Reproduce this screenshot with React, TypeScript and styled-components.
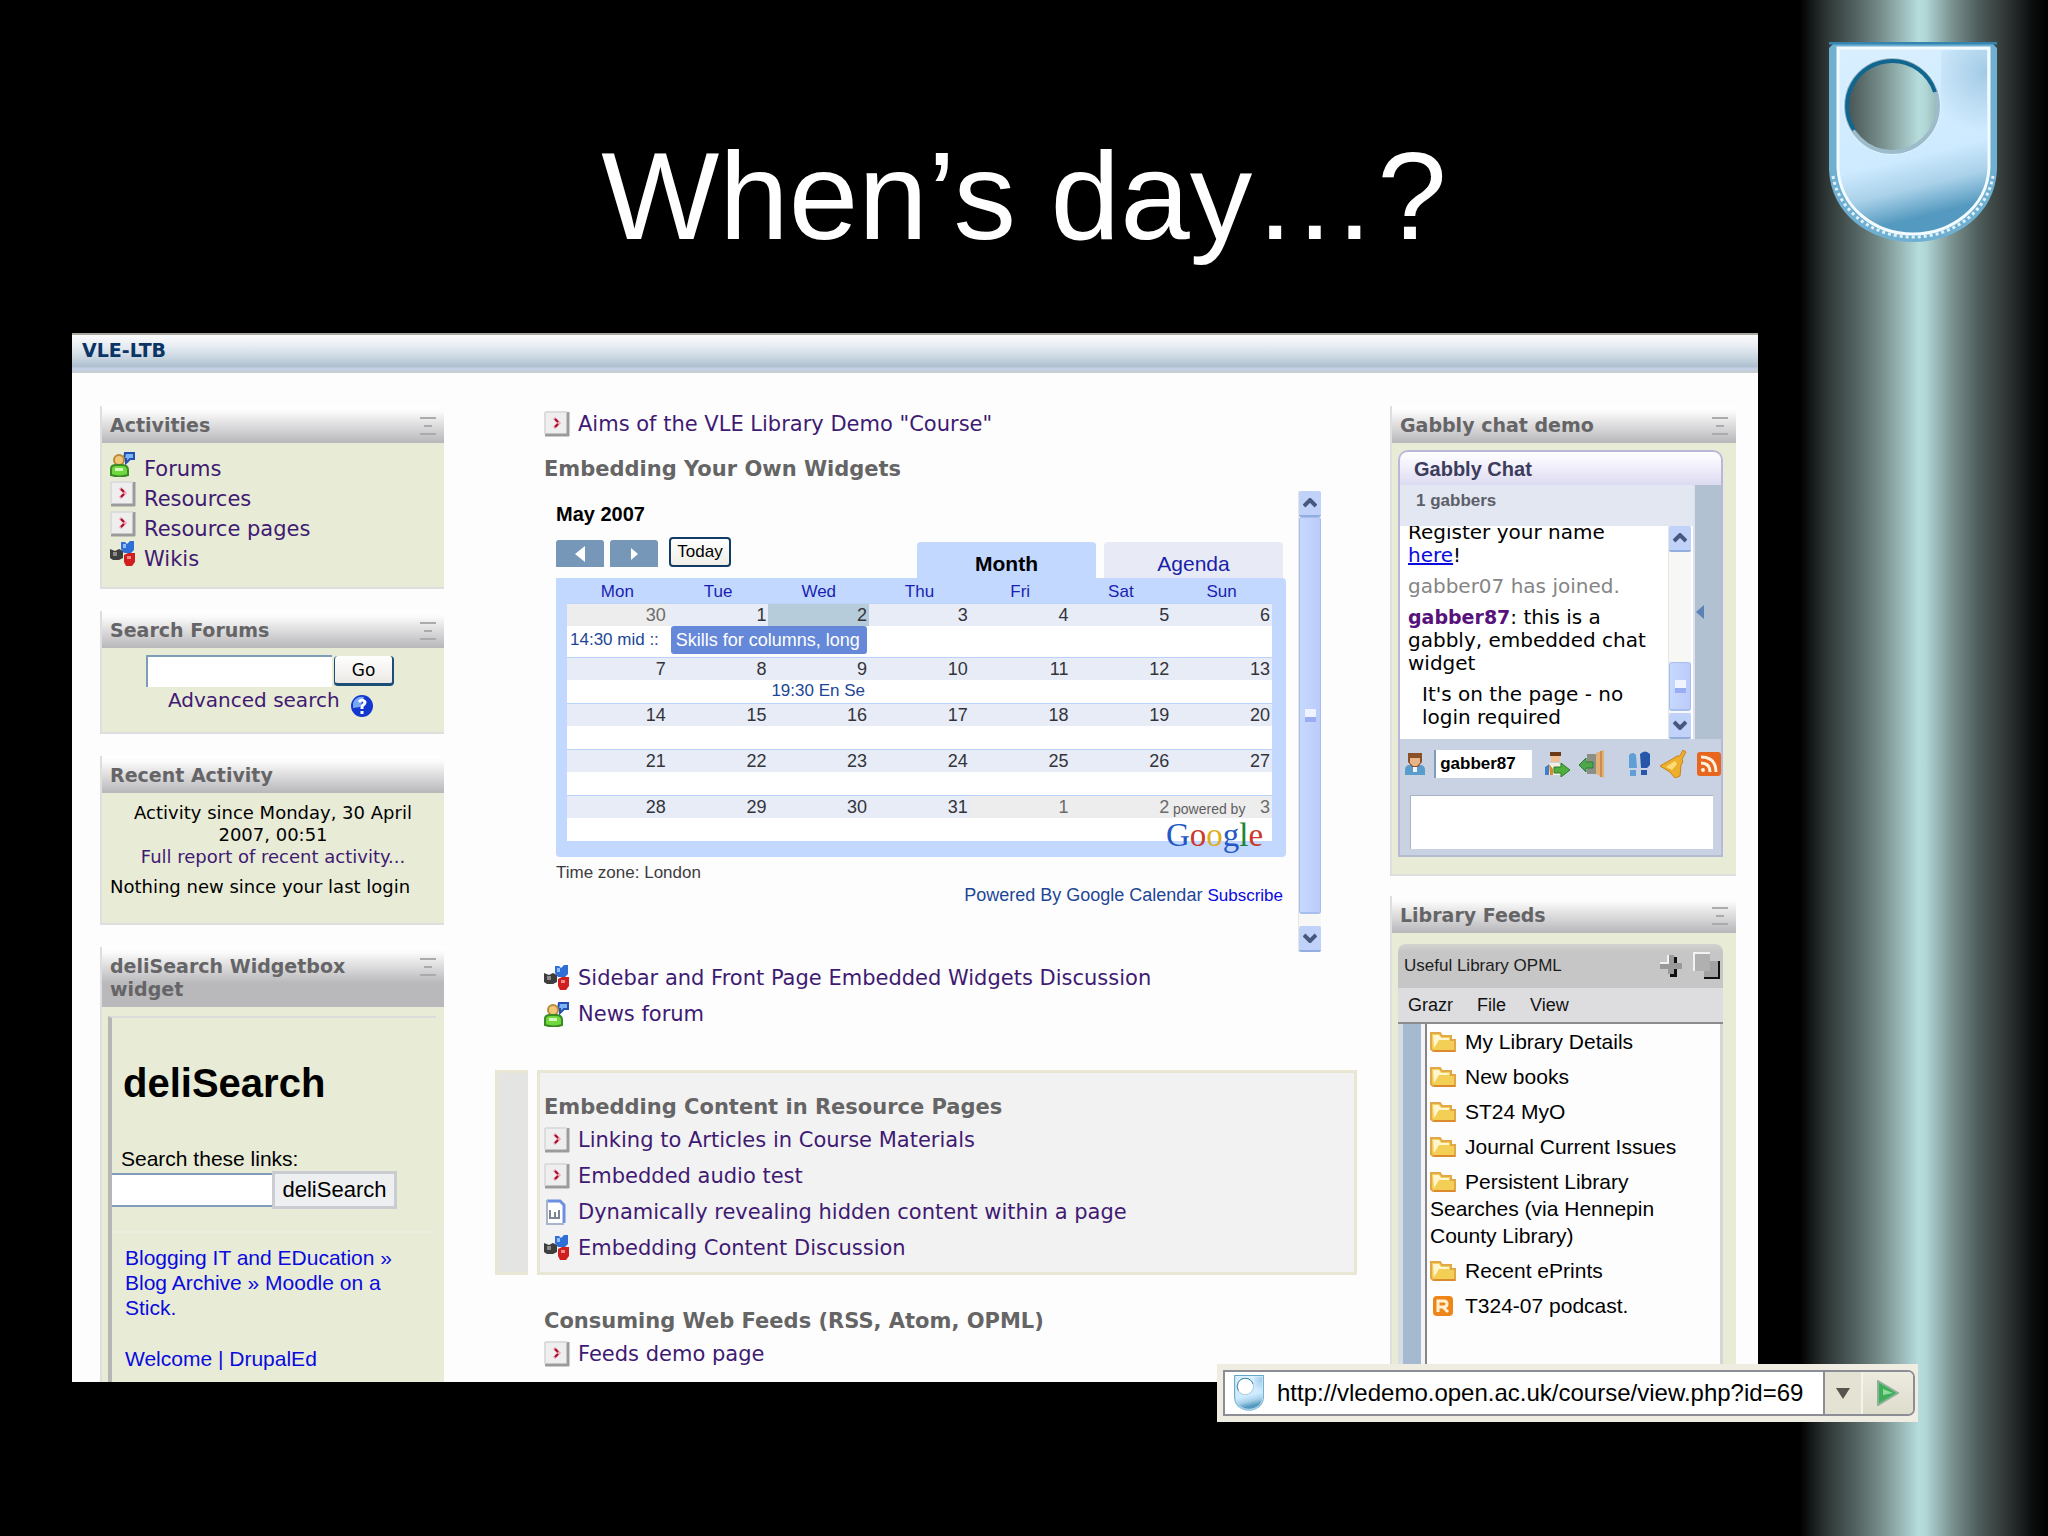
import React from "react";
import styled, { createGlobalStyle, css } from "styled-components";

const verdana = `"DejaVu Sans", sans-serif`;
const arial = `"Liberation Sans", Arial, sans-serif`;

const GlobalStyle = createGlobalStyle`
  *, *::before, *::after { box-sizing: border-box; }
  body { margin: 0; background: #000; font-family: ${verdana}; }
  h1, h2, h3, p, ul { margin: 0; padding: 0; }
  ul { list-style: none; }
  a { text-decoration: none; }
  button, input, textarea { font: inherit; margin: 0; padding: 0; border-radius: 0; outline: none; }
  button { cursor: pointer; background: none; border: 0; }
  svg { display: block; flex: none; }
`;

/* ---------- slide ---------- */

const Slide = styled.main`
  position: relative;
  display: flex;
  flex-direction: column;
  height: 100vh;
  overflow: hidden;
  padding-bottom: 154px;
  background:
    linear-gradient(90deg, #000 0%, #2b3332 10%, #576866 24%, #7c9492 34%, #b6dddc 48%, #b0d5d4 51%, #7b9391 61%, #4e5d5b 72%, #323a39 82%, #0b0d0d 94%, #000 100%)
    right / 248px 100% no-repeat, #000;
`;

const Title = styled.h1`
  padding: 124px 0 65px;
  text-align: center;
  color: #fff;
  font: 400 125px/144px ${arial};
`;

const CrestHolder = styled.div`
  position: absolute;
  top: 42px;
  right: 51px;
`;

/* ---------- captured page ---------- */

const Page = styled.section`
  flex: 1;
  min-height: 0;
  overflow: hidden;
  margin: 0 290px 0 72px;
  background: #fdfdfe;
`;

const PageBar = styled.header`
  height: 40px;
  padding-left: 10px;
  border-top: 2px solid #a9a79d;
  border-bottom: 2px solid #c9cdd0;
  background: linear-gradient(#fbfbfd, #e8edf3 30%, #c8d5e0 65%, #adbfd0 88%, #c3cfe2 92%);
  color: #0b3564;
  font: 700 19px/31px ${verdana};
`;

const Columns = styled.div`
  display: grid;
  grid-template-columns: 344px 1fr 346px;
  gap: 33px;
  padding: 33px 22px 0 28px;
`;

const SideColumn = styled.aside<{ $tight?: boolean }>`
  display: flex;
  flex-direction: column;
  gap: ${(p) => (p.$tight ? 20 : 22)}px;
`;

const BlockBox = styled.section`
  border: 2px solid #dedede;
  border-width: 0 0 2px 2px;
  background: #e8ebd6;
`;

const BlockHead = styled.header`
  display: flex;
  justify-content: space-between;
  align-items: flex-start;
  gap: 20px;
  padding: 8px 8px 6px;
  background: linear-gradient(#fff, #fafafa 6px, #b9b8bb 36px);
`;

const BlockTitle = styled.h2`
  color: #656567;
  font: 700 19px/23px ${verdana};
`;

const Toggle = styled.button`
  display: flex;
  flex-direction: column;
  align-items: center;
  gap: 6px;
  padding-top: 3px;
  i { width: 16px; height: 2px; background: #ababab; }
  i:nth-child(2) { width: 8px; }
`;

const purple = "#3f1a72";

const IconRow = styled.a`
  display: flex;
  align-items: flex-start;
  gap: 8px;
  height: 30px;
  color: ${purple};
  font-size: 21px;
  span { align-self: flex-end; line-height: 24px; }
`;

const ActivityList = styled.ul`
  padding: 8px 8px 16px;
`;

const ForumSearch = styled.form`
  padding: 7px 0 20px;
`;

const FieldRow = styled.div`
  display: flex;
  align-items: center;
  gap: 2px;
  padding-left: 44px;
`;

const ForumInput = styled.input`
  width: 186px;
  height: 32px;
  border: 2px solid #7f9db9;
  border-width: 2px 0 0 2px;
  background: #fff;
`;

const GoButton = styled.button`
  width: 60px;
  height: 30px;
  border: 2px solid #1c4f78;
  border-width: 0 2px 3px 1px;
  border-radius: 4px;
  background: linear-gradient(#fff, #ece9e4);
  color: #000;
  font: 17px/24px ${verdana};
`;

const AdvancedRow = styled.div`
  display: flex;
  align-items: flex-start;
  gap: 10px;
  padding-left: 66px;
  height: 25px;
  a { color: ${purple}; font-size: 20px; line-height: 26px; }
  svg { margin-top: 7px; }
`;

const RecentBody = styled.div`
  padding: 9px 8px 25px;
  color: #000;
  font-size: 18px;
  line-height: 22px;
  text-align: center;
  white-space: nowrap;
  a { color: ${purple}; }
  p + p { margin-top: 8px; text-align: left; }
`;

const DeliFrame = styled.div`
  margin: 9px 8px 0 6px;
  min-height: 440px;
  border: 4px solid #b6b6b6;
  border-width: 2px 0 0 4px;
  border-top-color: #dcdcdc;
  font-family: ${arial};
`;

const DeliTitle = styled.h3`
  padding: 42px 11px 41px;
  font: 700 40px/46px ${arial};
`;

const DeliLabel = styled.label`
  display: block;
  padding-left: 9px;
  font-size: 21px;
  line-height: 24px;
`;

const DeliRow = styled.div`
  display: flex;
  align-items: center;
  padding-bottom: 22px;
  border-bottom: 2px solid #eceddf;
  input { width: 160px; height: 34px; border: 2px solid #7f9db9; border-width: 2px 0; background: #fff; }
  button { width: 125px; height: 38px; border: 3px solid #c9cdd2; background: #eeeff1; color: #000; font-size: 22px; }
`;

const DeliLinks = styled.div`
  display: flex;
  flex-direction: column;
  gap: 26px;
  padding: 12px 26px 0 13px;
  font-size: 21px;
  line-height: 25px;
  a { color: #0a0adf; }
`;

/* ---------- middle column ---------- */

const Middle = styled.div`
  margin-left: 18px;
`;

const Week = styled.section<{ $framed?: boolean; $first?: boolean }>`
  display: grid;
  grid-template-columns: 33px 1fr;
  gap: 9px;
  margin-bottom: 9px;
  ${(p) => p.$first && css`margin-bottom: 29px;`}
  --edge: ${(p) => (p.$framed ? "#e9e7d3" : "transparent")};
`;

const WeekStrip = styled.div<{ $framed?: boolean }>`
  border: 3px solid var(--edge);
  border-width: 3px 0 3px 3px;
  background: ${(p) => (p.$framed ? "#e4e4e2" : "transparent")};
`;

const WeekBody = styled.div<{ $framed?: boolean; $first?: boolean }>`
  padding: ${(p) => (p.$first ? "0 0 9px 4px" : "20px 4px 6px")};
  border: 3px solid var(--edge);
  border-top-width: ${(p) => (p.$first ? 0 : 3)}px;
  border-bottom-width: ${(p) => (p.$first ? 0 : 3)}px;
  background: ${(p) => (p.$framed ? "#f3f2f3" : "transparent")};
`;

const WeekTitle = styled.h3<{ $spaced?: boolean }>`
  margin-top: ${(p) => (p.$spaced ? 13 : 0)}px;
  color: #656565;
  font: 700 21px/29px ${verdana};
`;

const ResourceRow = styled.a`
  display: flex;
  align-items: center;
  gap: 8px;
  height: 36px;
  color: ${purple};
  font-size: 21px;
  line-height: 28px;
  white-space: nowrap;
`;

/* ---------- calendar ---------- */

const Widget = styled.div`
  display: flex;
  gap: 12px;
  height: 461px;
  margin: 7px 33px 8px 12px;
  font-family: ${arial};
`;

const Calendar = styled.div`
  flex: 1;
  padding-top: 11px;
`;

const MonthName = styled.h4`
  margin: 0;
  font: 700 20px/24px ${arial};
`;

const CalTools = styled.div`
  display: flex;
  align-items: flex-end;
  gap: 6px;
  height: 52px;
  padding-right: 3px;
`;

const Arrow = styled.button`
  display: grid;
  place-items: center;
  width: 48px;
  height: 27px;
  margin-bottom: 11px;
  border-radius: 3px 3px 0 0;
  background: #7797b8;
`;

const Today = styled.button`
  width: 62px;
  height: 30px;
  margin: 0 auto 11px 5px;
  border: 2px solid #123c66;
  border-radius: 4px;
  background: linear-gradient(#fff, #efeee6);
  color: #000;
  font-size: 17px;
`;

const Tab = styled.button<{ $active?: boolean }>`
  width: 179px;
  height: 36px;
  margin-left: 2px;
  padding-top: 8px;
  border-radius: 4px 4px 0 0;
  background: ${(p) => (p.$active ? "#c3d8ff" : "#e8ebf6")};
  color: ${(p) => (p.$active ? "#000" : "#1a1fa8")};
  font: ${(p) => (p.$active ? 700 : 400)} 21px/24px ${arial};
`;

const CalFrame = styled.div`
  position: relative;
  padding: 0 14px 16px 11px;
  border-radius: 0 4px 4px 4px;
  background: #c3d8ff;
`;

const CalTable = styled.table`
  width: 100%;
  table-layout: fixed;
  border-spacing: 0;
  border-collapse: separate;
  th { height: 25px; padding: 2px 0 0; color: #1a1fb0; font: 17px/20px ${arial}; text-align: center; }
  td { padding: 0; }
`;

const DayCell = styled.td<{ $tone?: "other" | "today" }>`
  height: 23px;
  border-top: 1px solid #b8d4fa;
  background: ${(p) => (p.$tone === "today" ? "#b7ccda" : p.$tone === "other" ? "#ededee" : "#e8ecf7")};
  color: ${(p) => (p.$tone === "other" ? "#6b6b6b" : "#33343a")};
  font-size: 18px;
  line-height: 22px;
  text-align: right;
  && { padding-right: 2px; }
`;

const SlotCell = styled.td<{ $tall?: boolean }>`
  height: ${(p) => (p.$tall ? 31 : 23)}px;
  background: #fff;
  color: #1d4796;
  font-size: 17px;
  white-space: nowrap;
  overflow: hidden;
  vertical-align: top;
  && { padding-left: 3px; }
`;

const EventBar = styled.div`
  overflow: hidden;
  height: 28px;
  margin-right: 2px;
  padding-left: 5px;
  border-radius: 3px;
  background: #6588d9;
  color: #fff;
  font-size: 18px;
  line-height: 28px;
`;

const EventText = styled.div<{ $tall?: boolean }>`
  line-height: ${(p) => (p.$tall ? 28 : 22)}px;
`;

const Brand = styled.div`
  position: absolute;
  right: 22px;
  bottom: 3px;
  width: 98px;
  text-align: left;
  small { display: block; padding-left: 7px; color: #5f5f5f; font: 14px/16px ${arial}; }
  strong { display: block; font: 400 33px/37px "Liberation Serif", serif; }
  .b { color: #2558c4; }
  .r { color: #c93a2c; }
  .y { color: #e0ae1c; }
  .g { color: #1c8531; }
`;

const Zone = styled.p`
  margin-top: 6px;
  color: #3c3c3c;
  font-size: 17px;
  line-height: 20px;
`;

const Powered = styled.p`
  margin-top: 2px;
  padding-right: 3px;
  color: #1d4796;
  font-size: 18px;
  line-height: 20px;
  text-align: right;
  a { color: #0a0adf; font-size: 17px; }
`;

/* ---------- scroll bars ---------- */

const Bar = styled.div`
  display: flex;
  flex-direction: column;
  width: 23px;
  border-left: 1px solid #e6e6e0;
  background: #f7f7f5;
`;

const BarButton = styled.button`
  display: grid;
  place-items: center;
  height: 26px;
  border-bottom: 2px solid #93aede;
  border-radius: 2px;
  background: #c0d2fa;
`;

const Thumb = styled.div<{ $size?: number }>`
  display: grid;
  place-items: center;
  ${(p) => (p.$size ? css`height: ${p.$size}px; margin-top: auto;` : css`flex: 1;`)}
  margin-bottom: ${(p) => (p.$size ? 2 : 12)}px;
  border: 1px solid #a8bdf0;
  border-bottom-width: 2px;
  border-radius: 3px;
  background: linear-gradient(90deg, #c6d9fe, #bccbf9);
  i { width: 11px; height: 13px; background: linear-gradient(#eef3ff 60%, #98aef0 60%); }
`;

/* ---------- chat ---------- */

const ChatBody = styled.div`
  padding: 7px 13px 17px 6px;
`;

const ChatFrame = styled.div`
  border: 2px solid #b9b8da;
  border-radius: 10px 10px 0 0;
  border-bottom-color: #b4bdd0;
  background: #c8d2e2;
  overflow: hidden;
`;

const ChatTitle = styled.h3`
  padding: 2px 14px 0;
  height: 33px;
  background: linear-gradient(#fff, #f3f1fb 40%, #dcdaf0);
  color: #3c3c5c;
  font: 700 20px/30px ${arial};
`;

const ChatMain = styled.div`
  display: grid;
  grid-template-columns: 1fr 28px;
  grid-template-rows: 41px 213px;
`;

const Gabbers = styled.div`
  padding-left: 16px;
  background: #e2e7f2;
  color: #5c5f68;
  font: 700 17px/32px ${arial};
`;

const ChatSide = styled.button`
  grid-column: 2;
  grid-row: 1 / 3;
  display: grid;
  place-items: center start;
  padding-left: 1px;
  border-left: 2px solid #dde3ee;
  background: #b2c1d2;
`;

const LogPane = styled.div`
  display: flex;
  justify-content: space-between;
  overflow: hidden;
  padding-right: 2px;
  background: #fff;
`;

const Log = styled.div`
  display: flex;
  flex-direction: column;
  justify-content: flex-end;
  gap: 8px;
  padding: 0 0 10px 8px;
  color: #000;
  font-size: 20px;
  line-height: 23px;
  white-space: nowrap;
  a { color: #0a0adf; text-decoration: underline; text-decoration-thickness: 2px; }
`;

const LogLine = styled.p<{ $quiet?: boolean; $indent?: boolean }>`
  color: ${(p) => (p.$quiet ? "#858585" : "#000")};
  padding-left: ${(p) => (p.$indent ? 14 : 0)}px;
  b { color: #57127c; font-size: 19px; }
`;

const ChatTools = styled.div`
  display: flex;
  align-items: center;
  justify-content: space-between;
  height: 56px;
  padding: 0 2px 6px 5px;
  input {
    width: 98px;
    height: 28px;
    padding-left: 4px;
    border: 0;
    border-left: 2px solid #7f9db9;
    background: #fff;
    color: #000;
    font: 700 17px ${arial};
  }
  svg:first-child { margin-right: -3px; }
  button { flex: none; }
  button:nth-of-type(3) { margin-left: 12px; }
`;

const ChatEntry = styled.textarea`
  display: block;
  width: calc(100% - 18px);
  height: 54px;
  margin: 0 8px 6px 10px;
  border: 1px solid #a9b3c2;
  border-width: 1px 0 0 1px;
  background: #fff;
  resize: none;
`;

/* ---------- library feeds ---------- */

const FeedBody = styled.div`
  padding: 11px 13px 0 6px;
`;

const FeedTitle = styled.h3`
  display: flex;
  align-items: center;
  gap: 11px;
  height: 44px;
  padding: 0 2px 0 6px;
  border-radius: 8px 8px 0 0;
  background: linear-gradient(#d2d2cf, #c6c6c6 8px, #c6c6c6);
  color: #1c1c1c;
  font: 17px/24px ${arial};
  span { flex: 1; }
`;

const FeedMenu = styled.nav`
  display: flex;
  gap: 24px;
  height: 36px;
  padding-left: 10px;
  border-bottom: 2px solid #8b8b8f;
  background: #dddcdf;
  a { color: #111; font: 18px/35px ${arial}; }
`;

const FeedMain = styled.div`
  display: flex;
  border-left: 5px solid #d7dde0;
`;

const FeedGutter = styled.div`
  width: 22px;
  border-right: 4px solid #f4f4f6;
  background: #a5b9d0;
`;

const FeedList = styled.ul`
  flex: 1;
  min-height: 440px;
  padding-left: 2px;
  border-left: 2px solid #85858a;
  border-right: 3px solid #d6d6d6;
  background: #fdfdfe;
`;

const FeedItem = styled.li`
  padding: 4px 0 4px 1px;
  font: 21px/27px ${arial};
  a { color: #000; }
  svg { display: inline-block; vertical-align: -4px; margin-right: 9px; }
`;

/* ---------- address bar ---------- */

const Address = styled.form`
  position: absolute;
  right: 130px;
  bottom: 114px;
  width: 701px;
  padding: 6px 3px 6px 6px;
  background: #efede2;
`;

const AddressBox = styled.div`
  display: flex;
  align-items: stretch;
  height: 46px;
  border: 2px solid #8d8d96;
  border-radius: 0 7px 7px 0;
  background: #fff;
  overflow: hidden;
  > svg { align-self: center; margin: 0 13px 0 9px; }
  input { flex: 1; min-width: 0; border: 0; background: none; color: #000; font: 24px/40px ${arial}; }
`;

const AddressButton = styled.button<{ $wide?: boolean }>`
  display: grid;
  place-items: center;
  width: ${(p) => (p.$wide ? 52 : 38)}px;
  border-left: 2px solid ${(p) => (p.$wide ? "#f5f4ec" : "#8d8d96")};
  background: ${(p) => (p.$wide ? "linear-gradient(#edebdf, #dedccb)" : "#e4e2d3")};
`;

/* ---------- drawings ---------- */

const Crest = ({ width, id }: { width: number; id: string }) => (
  <svg width={width} height={(width * 200) / 168} viewBox="0 0 168 200" aria-hidden="true">
    <defs>
      <linearGradient id={`${id}a`} x1="0" y1="0" x2="0.2" y2="1">
        <stop offset="0" stopColor="#d9efff" />
        <stop offset="0.66" stopColor="#cdeaff" />
        <stop offset="0.82" stopColor="#a9d1e9" />
        <stop offset="0.98" stopColor="#5499bf" />
      </linearGradient>
      <radialGradient id={`${id}b`} gradientUnits="userSpaceOnUse" cx="157" cy="30" r="60">
        <stop offset="0" stopColor="#a3cbe5" />
        <stop offset="1" stopColor="#a3cbe5" stopOpacity="0" />
      </radialGradient>
    </defs>
    <path
      fillRule="evenodd"
      fill="#6fb0d2"
      d="M6 0H162L168 6V128C166 172 128 200 84 200S2 172 0 128V6ZM63 18A46 46 0 1 0 63 110A46 46 0 1 0 63 18Z"
    />
    <path
      fillRule="evenodd"
      fill={`url(#${id}a)`}
      stroke="#f4fbff"
      strokeWidth="3"
      d="M9 6H160V126C158 166 122 192 84 192S11 166 9 126ZM63 17A47 47 0 1 0 63 111A47 47 0 1 0 63 17Z"
    />
    <path fill={`url(#${id}b)`} d="M112 8H158V96H112Z" />
    <path d="M0 0H168" stroke="#3585b0" strokeWidth="5" />
    <path fill="none" stroke="#dff1fb" strokeWidth="3" strokeDasharray="3 3" d="M4 134C10 170 44 195 84 195S158 170 164 134" />
    <circle cx="63" cy="64" r="46" fill="none" stroke="#9cbccb" strokeWidth="4" />
    <path fill="none" stroke="#11668f" strokeWidth="4" d="M25 88A45 45 0 0 1 63 19A45 45 0 0 1 106 50" />
  </svg>
);

const ForumIcon = () => (
  <svg width="26" height="26" viewBox="0 0 26 26" aria-hidden="true">
    <path d="M15 2H24V8H20L16 12V8H14Z" fill="#7db4f5" stroke="#2450b4" strokeWidth="2" />
    <circle cx="9" cy="9" r="5" fill="#f2c878" stroke="#b98a3a" strokeWidth="2" />
    <path d="M1 24V18Q1 14 6 14H12Q18 14 18 19V24Q10 27 1 24Z" fill="#6fd83c" stroke="#3b8a26" strokeWidth="2" />
    <path d="M5 17H13V20H5Z" fill="#d6f8c0" />
  </svg>
);

const PageIcon = () => (
  <svg width="26" height="26" viewBox="0 0 26 26" aria-hidden="true">
    <path d="M1 1H25V25H1Z" fill="#efeeef" />
    <path d="M24 1V25M1 24H25" stroke="#9b9b9b" strokeWidth="3" fill="none" />
    <path d="M1 1H23M1 1V23" stroke="#dcdcdc" strokeWidth="2" fill="none" />
    <path d="M10 7L15 12L10 17" stroke="#f2a0ae" strokeWidth="3" fill="none" />
    <path d="M11 8L14 11M14 13L11 16" stroke="#a01030" strokeWidth="2" fill="none" />
  </svg>
);

const WikiIcon = () => (
  <svg width="26" height="26" viewBox="0 0 26 26" aria-hidden="true">
    <path d="M0 8L5 10L9 8L13 10V17L9 19H3L0 17Z" fill="#3e3e3e" />
    <path d="M3 11H7V15H3Z" fill="#8d8d8d" />
    <path d="M11 1H15L17 3L20 0H24V9L21 12H14L11 8Z" fill="#2f6fd8" />
    <path d="M13 3H16V7H13Z" fill="#94bff5" />
    <path d="M14 14L18 12H25V21L22 25H16L14 21Z" fill="#cf1f1f" />
    <path d="M17 15H21V18H17Z" fill="#f58a82" />
  </svg>
);

const DocIcon = () => (
  <svg width="26" height="26" viewBox="0 0 26 26" aria-hidden="true">
    <path d="M3 1H16L21 6V25H3Z" fill="#fff" />
    <path d="M3 2H16L20 6V24" stroke="#6c8fe0" strokeWidth="3" fill="none" />
    <path d="M3 1V25H20" stroke="#a9b4cc" strokeWidth="2" fill="none" />
    <path d="M6 11V19H15V11M11 13V19M6 19H15" stroke="#7d8494" strokeWidth="2" fill="none" />
  </svg>
);

const HelpIcon = () => (
  <svg width="24" height="24" viewBox="0 0 24 24" aria-hidden="true">
    <circle cx="12" cy="12" r="11" fill="#1437cf" />
    <path d="M3 9A9 9 0 0 1 14 3L10 13L3 14Z" fill="#79a7f8" />
    <path d="M9 8Q12 4 15 8Q15 10 12 12V15M12 17V20" stroke="#fff" strokeWidth="3" fill="none" />
  </svg>
);

const FolderIcon = () => (
  <svg width="26" height="22" viewBox="0 0 26 22" aria-hidden="true">
    <path d="M1 2H10L12 5H21V9H25V20H3L1 18Z" fill="#f3cf55" stroke="#e0a848" strokeWidth="2" />
    <path d="M3 4H9L11 7H19V9H9L4 17Z" fill="#fff6d0" />
    <path d="M4 20H25" stroke="#dd8a2e" strokeWidth="2" />
  </svg>
);

const FeedIcon = () => (
  <svg width="26" height="26" viewBox="0 0 26 26" aria-hidden="true">
    <rect x="1" y="1" width="24" height="24" rx="3" fill="#e8671e" />
    <path d="M5 6Q20 6 20 21M5 12Q14 12 14 21" stroke="#fff0e0" strokeWidth="3" fill="none" />
    <circle cx="7" cy="19" r="2" fill="#fff0e0" />
  </svg>
);

const PodcastIcon = () => (
  <svg width="26" height="22" viewBox="0 0 26 22" aria-hidden="true">
    <rect x="3" y="1" width="20" height="20" rx="4" fill="#ee8518" />
    <path d="M8 17V6H14Q17 6 17 9Q17 12 13 12L18 17M8 12H13" stroke="#fff1d2" strokeWidth="3" fill="none" />
  </svg>
);

const PersonIcon = () => (
  <svg width="20" height="24" viewBox="0 0 20 24" aria-hidden="true">
    <path d="M0 23V18Q0 13 5 13H15Q20 13 20 18V23Z" fill="#5a9ccb" />
    <path d="M3 1H17V10L13 15H7L3 10Z" fill="#8a5028" />
    <path d="M5 6H15V11L12 14H8L5 11Z" fill="#e8b489" />
    <path d="M8 15H12V20H8Z" fill="#f0f4f8" />
  </svg>
);

const InviteIcon = () => (
  <svg width="26" height="26" viewBox="0 0 26 26" aria-hidden="true">
    <path d="M6 1H17V5H6Z" fill="#6b3a16" />
    <path d="M7 5H16V11H7Z" fill="#f0bf92" />
    <path d="M1 24V16Q3 12 8 12H15L18 16V24Z" fill="#f4efe4" />
    <path d="M1 24V16L5 13V24Z" fill="#3f7fd0" />
    <path d="M5 13L9 18V24H6Z" fill="#d88a2a" />
    <path d="M10 16H17V12L26 19L17 26V22H10Z" fill="#4fae3e" stroke="#2d7d2c" />
  </svg>
);

const DoorIcon = () => (
  <svg width="26" height="28" viewBox="0 0 26 28" aria-hidden="true">
    <path d="M8 4H20V24H8Z" fill="#8b8f86" />
    <path d="M17 3L25 0V28L17 24Z" fill="#e3b077" />
    <path d="M22 1V27" stroke="#c98d50" strokeWidth="2" />
    <path d="M0 15L7 8V12H14V18H7V22Z" fill="#4ea64a" stroke="#2f7a36" />
  </svg>
);

const StepsIcon = () => (
  <svg width="24" height="26" viewBox="0 0 24 26" aria-hidden="true">
    <path d="M2 4Q6 0 9 4L10 17H2ZM3 19H9V25H3Z" fill="#5f9ed6" />
    <path d="M13 3Q18 -2 23 3V14L20 17H14ZM14 19H20V24H14Z" fill="#2757a8" />
  </svg>
);

const BellIcon = () => (
  <svg width="27" height="28" viewBox="0 0 27 28" aria-hidden="true">
    <path d="M0 16L14 8Q17 5 20 6L23 0L26 2L22 9Q24 12 21 15L20 26L15 28L10 22Z" fill="#eeb02c" stroke="#c98214" />
    <path d="M6 17L15 11L17 14L12 20Z" fill="#fbdc79" />
  </svg>
);

const Chevron = ({ down }: { down?: boolean }) => (
  <svg width="14" height="10" viewBox="0 0 14 10" aria-hidden="true">
    <path d={down ? "M1 2L7 8L13 2" : "M1 8L7 2L13 8"} stroke="#46587c" strokeWidth="4" fill="none" />
  </svg>
);

/* ---------- parts ---------- */

const Block = ({ title, toggle = true, children }: { title: string; toggle?: boolean; children: React.ReactNode }) => (
  <BlockBox>
    <BlockHead>
      <BlockTitle>{title}</BlockTitle>
      {toggle && (
        <Toggle type="button" aria-label={`Hide ${title}`}>
          <i />
          <i />
          <i />
        </Toggle>
      )}
    </BlockHead>
    {children}
  </BlockBox>
);

const ScrollBar = ({ thumb }: { thumb?: number }) => (
  <Bar>
    <BarButton type="button" aria-label="Scroll up">
      <Chevron />
    </BarButton>
    <Thumb $size={thumb}>
      <i />
    </Thumb>
    <BarButton type="button" aria-label="Scroll down">
      <Chevron down />
    </BarButton>
  </Bar>
);

const Resource = ({ icon, children }: { icon: React.ReactNode; children: React.ReactNode }) => (
  <ResourceRow href="#">
    {icon}
    {children}
  </ResourceRow>
);

const weeks = [
  [30, 1, 2, 3, 4, 5, 6],
  [7, 8, 9, 10, 11, 12, 13],
  [14, 15, 16, 17, 18, 19, 20],
  [21, 22, 23, 24, 25, 26, 27],
  [28, 29, 30, 31, 1, 2, 3],
];

const toneOf = (week: number, day: number) => {
  if ((week === 0 && day === 0) || (week === 4 && day > 3)) return "other" as const;
  if (week === 0 && day === 2) return "today" as const;
  return undefined;
};

const Slots = ({ week }: { week: number }) => {
  if (week === 0) {
    return (
      <tr>
        <SlotCell $tall>
          <EventText $tall>14:30 mid ::</EventText>
        </SlotCell>
        <SlotCell $tall colSpan={2}>
          <EventBar>Skills for columns, long</EventBar>
        </SlotCell>
        <SlotCell $tall colSpan={4} />
      </tr>
    );
  }
  if (week === 1) {
    return (
      <tr>
        <SlotCell colSpan={2} />
        <SlotCell>
          <EventText>19:30 En Se</EventText>
        </SlotCell>
        <SlotCell colSpan={4} />
      </tr>
    );
  }
  return (
    <tr>
      <SlotCell colSpan={7} />
    </tr>
  );
};

const CalendarWidget = () => (
  <Widget>
    <Calendar>
      <MonthName>May 2007</MonthName>
      <CalTools>
        <Arrow type="button" aria-label="Previous month">
          <svg width="10" height="16" viewBox="0 0 10 16">
            <path d="M10 0V16L0 8Z" fill="#fff" />
          </svg>
        </Arrow>
        <Arrow type="button" aria-label="Next month">
          <svg width="7" height="12" viewBox="0 0 7 12">
            <path d="M0 0V12L7 6Z" fill="#fff" />
          </svg>
        </Arrow>
        <Today type="button">Today</Today>
        <Tab type="button" $active>
          Month
        </Tab>
        <Tab type="button">Agenda</Tab>
      </CalTools>
      <CalFrame>
        <CalTable>
          <thead>
            <tr>
              {["Mon", "Tue", "Wed", "Thu", "Fri", "Sat", "Sun"].map((d) => (
                <th key={d}>{d}</th>
              ))}
            </tr>
          </thead>
          <tbody>
            {weeks.map((days, w) => (
              <React.Fragment key={w}>
                <tr>
                  {days.map((n, d) => (
                    <DayCell key={d} $tone={toneOf(w, d)}>
                      {n}
                    </DayCell>
                  ))}
                </tr>
                <Slots week={w} />
              </React.Fragment>
            ))}
          </tbody>
        </CalTable>
        <Brand>
          <small>powered by</small>
          <strong>
            <span className="b">G</span>
            <span className="r">o</span>
            <span className="y">o</span>
            <span className="b">g</span>
            <span className="g">l</span>
            <span className="r">e</span>
          </strong>
        </Brand>
      </CalFrame>
      <Zone>Time zone: London</Zone>
      <Powered>
        Powered By Google Calendar <a href="#">Subscribe</a>
      </Powered>
    </Calendar>
    <ScrollBar />
  </Widget>
);

const feeds = [
  "My Library Details",
  "New books",
  "ST24 MyO",
  "Journal Current Issues",
  "Persistent Library Searches (via Hennepin County Library)",
  "Recent ePrints",
];

export default function App() {
  return (
    <>
      <GlobalStyle />
      <Slide>
        <Title>When’s day…?</Title>
        <CrestHolder>
          <Crest width={168} id="crest" />
        </CrestHolder>
        <Page>
          <PageBar>VLE-LTB</PageBar>
          <Columns>
            <SideColumn>
              <Block title="Activities">
                <ActivityList>
                  <li>
                    <IconRow href="#">
                      <ForumIcon />
                      <span>Forums</span>
                    </IconRow>
                  </li>
                  <li>
                    <IconRow href="#">
                      <PageIcon />
                      <span>Resources</span>
                    </IconRow>
                  </li>
                  <li>
                    <IconRow href="#">
                      <PageIcon />
                      <span>Resource pages</span>
                    </IconRow>
                  </li>
                  <li>
                    <IconRow href="#">
                      <WikiIcon />
                      <span>Wikis</span>
                    </IconRow>
                  </li>
                </ActivityList>
              </Block>
              <Block title="Search Forums">
                <ForumSearch>
                  <FieldRow>
                    <ForumInput type="text" aria-label="Search forums" />
                    <GoButton type="button">Go</GoButton>
                  </FieldRow>
                  <AdvancedRow>
                    <a href="#">Advanced search</a>
                    <HelpIcon />
                  </AdvancedRow>
                </ForumSearch>
              </Block>
              <Block title="Recent Activity" toggle={false}>
                <RecentBody>
                  <p>
                    Activity since Monday, 30 April
                    <br />
                    2007, 00:51
                    <br />
                    <a href="#">Full report of recent activity...</a>
                  </p>
                  <p>Nothing new since your last login</p>
                </RecentBody>
              </Block>
              <Block title="deliSearch Widgetbox widget">
                <DeliFrame>
                  <DeliTitle>deliSearch</DeliTitle>
                  <DeliLabel htmlFor="deli">Search these links:</DeliLabel>
                  <DeliRow>
                    <input id="deli" type="text" />
                    <button type="button">deliSearch</button>
                  </DeliRow>
                  <DeliLinks>
                    <a href="#">Blogging IT and EDucation » Blog Archive » Moodle on a Stick.</a>
                    <a href="#">Welcome | DrupalEd</a>
                  </DeliLinks>
                </DeliFrame>
              </Block>
            </SideColumn>

            <Middle>
              <Week $first>
                <WeekStrip />
                <WeekBody $first>
                  <Resource icon={<PageIcon />}>Aims of the VLE Library Demo "Course"</Resource>
                  <WeekTitle $spaced>Embedding Your Own Widgets</WeekTitle>
                  <CalendarWidget />
                  <Resource icon={<WikiIcon />}>Sidebar and Front Page Embedded Widgets Discussion</Resource>
                  <Resource icon={<ForumIcon />}>News forum</Resource>
                </WeekBody>
              </Week>
              <Week $framed>
                <WeekStrip $framed />
                <WeekBody $framed>
                  <WeekTitle>Embedding Content in Resource Pages</WeekTitle>
                  <Resource icon={<PageIcon />}>Linking to Articles in Course Materials</Resource>
                  <Resource icon={<PageIcon />}>Embedded audio test</Resource>
                  <Resource icon={<DocIcon />}>Dynamically revealing hidden content within a page</Resource>
                  <Resource icon={<WikiIcon />}>Embedding Content Discussion</Resource>
                </WeekBody>
              </Week>
              <Week>
                <WeekStrip />
                <WeekBody>
                  <WeekTitle>Consuming Web Feeds (RSS, Atom, OPML)</WeekTitle>
                  <Resource icon={<PageIcon />}>Feeds demo page</Resource>
                </WeekBody>
              </Week>
            </Middle>

            <SideColumn $tight>
              <Block title="Gabbly chat demo">
                <ChatBody>
                  <ChatFrame>
                    <ChatTitle>Gabbly Chat</ChatTitle>
                    <ChatMain>
                      <Gabbers>1 gabbers</Gabbers>
                      <ChatSide type="button" aria-label="Show gabbers">
                        <svg width="8" height="14" viewBox="0 0 8 14">
                          <path d="M8 0V14L0 7Z" fill="#5b82b8" />
                        </svg>
                      </ChatSide>
                      <LogPane>
                        <Log>
                          <LogLine>
                            Register your name
                            <br />
                            <a href="#">here</a>!
                          </LogLine>
                          <LogLine $quiet>gabber07 has joined.</LogLine>
                          <LogLine>
                            <b>gabber87</b>: this is a
                            <br />
                            gabbly, embedded chat
                            <br />
                            widget
                          </LogLine>
                          <LogLine $indent>
                            It's on the page - no
                            <br />
                            login required
                          </LogLine>
                        </Log>
                        <ScrollBar thumb={49} />
                      </LogPane>
                    </ChatMain>
                    <ChatTools>
                      <PersonIcon />
                      <input type="text" aria-label="Nickname" defaultValue="gabber87" />
                      <button type="button" aria-label="Invite">
                        <InviteIcon />
                      </button>
                      <button type="button" aria-label="Leave">
                        <DoorIcon />
                      </button>
                      <button type="button" aria-label="Follow">
                        <StepsIcon />
                      </button>
                      <button type="button" aria-label="Sound">
                        <BellIcon />
                      </button>
                      <button type="button" aria-label="Feed">
                        <FeedIcon />
                      </button>
                    </ChatTools>
                    <ChatEntry aria-label="Message" />
                  </ChatFrame>
                </ChatBody>
              </Block>
              <Block title="Library Feeds">
                <FeedBody>
                  <FeedTitle>
                    <span>Useful Library OPML</span>
                    <svg width="22" height="24" viewBox="0 0 22 24" aria-hidden="true">
                      <path d="M10 3H17V23H10Z" fill="#111" />
                      <path d="M0 9H22V15H0Z" fill="#999" />
                      <path d="M8 1H14V20H8Z" fill="#999" />
                      <path d="M0 9H8V1" stroke="#f2f2f2" strokeWidth="2" fill="none" />
                    </svg>
                    <svg width="28" height="28" viewBox="0 0 28 28" aria-hidden="true">
                      <path d="M11 9H27V27H11Z" fill="#111" />
                      <path d="M11 9H25V25H11Z" fill="#a2a2a2" />
                      <path d="M1 1H17V19H1Z" fill="#b0b0b0" />
                      <path d="M1 19V1H17" stroke="#f2f2f2" strokeWidth="2" fill="none" />
                    </svg>
                  </FeedTitle>
                  <FeedMenu>
                    <a href="#">Grazr</a>
                    <a href="#">File</a>
                    <a href="#">View</a>
                  </FeedMenu>
                  <FeedMain>
                    <FeedGutter />
                    <FeedList>
                      {feeds.map((f) => (
                        <FeedItem key={f}>
                          <a href="#">
                            <FolderIcon />
                            {f}
                          </a>
                        </FeedItem>
                      ))}
                      <FeedItem>
                        <a href="#">
                          <PodcastIcon />
                          T324-07 podcast.
                        </a>
                      </FeedItem>
                    </FeedList>
                  </FeedMain>
                </FeedBody>
              </Block>
            </SideColumn>
          </Columns>
        </Page>

        <Address>
          <AddressBox>
            <Crest width={30} id="favicon" />
            <input type="text" aria-label="Address" defaultValue="http://vledemo.open.ac.uk/course/view.php?id=69" />
            <AddressButton type="button" aria-label="History">
              <svg width="14" height="11" viewBox="0 0 14 11">
                <path d="M0 0H14L7 11Z" fill="#55554d" />
              </svg>
            </AddressButton>
            <AddressButton type="button" $wide aria-label="Go">
              <svg width="22" height="26" viewBox="0 0 22 26">
                <path d="M1 1L21 13L1 25Z" fill="#3fae5a" stroke="#8fb09a" strokeWidth="2" />
                <path d="M6 9L16 13L6 15Z" fill="#8fdc9c" />
              </svg>
            </AddressButton>
          </AddressBox>
        </Address>
      </Slide>
    </>
  );
}
